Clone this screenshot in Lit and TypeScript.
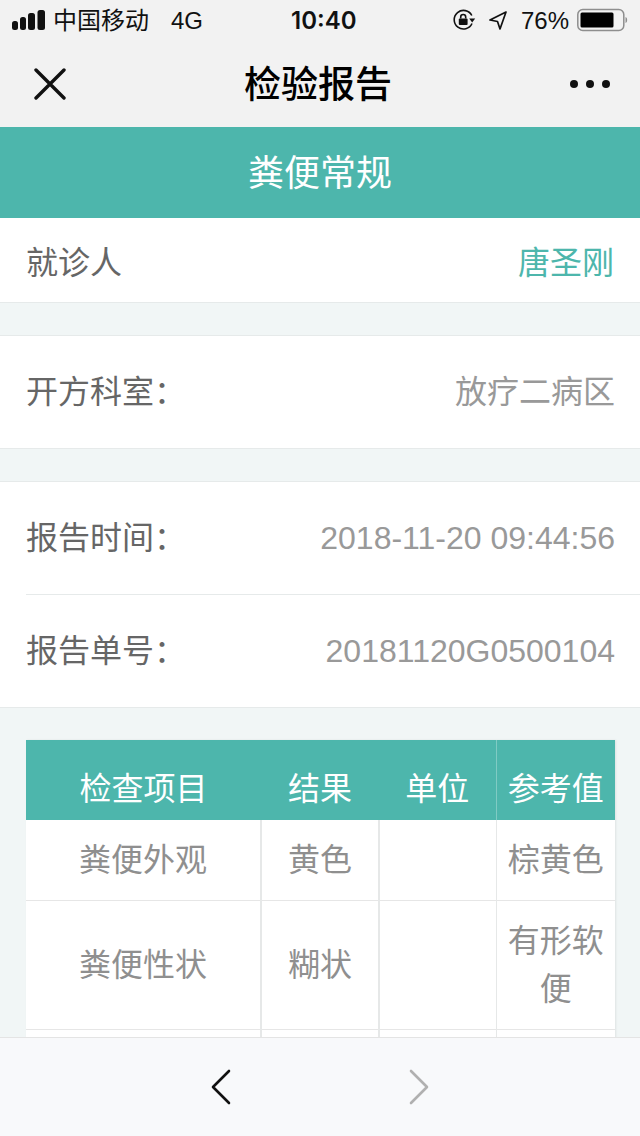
import {css, html, LitElement} from 'lit';
import {customElement} from 'lit/decorators.js';

const infoGroups = [
  [{label: '开方科室：', value: '放疗二病区'}],
  [
    {label: '报告时间：', value: '2018-11-20 09:44:56'},
    {label: '报告单号：', value: '20181120G0500104'},
  ],
];

const tableRows = [
  {name: '粪便外观', result: '黄色', unit: '', ref: '棕黄色', tall: false},
  {name: '粪便性状', result: '糊状', unit: '', ref: '有形软便', tall: true},
  {name: '', result: '', unit: '', ref: '', tall: false},
];

@customElement('app-root')
export class AppRoot extends LitElement {
  static styles = css`
    :host {
      display: flex;
      flex-direction: column;
      width: 640px;
      height: 1136px;
      overflow: hidden;
      background: #f1f6f6;
      font-family: "Liberation Sans", "Noto Sans CJK SC", sans-serif;
      color: #000;
    }
    .top {
      flex: none;
      height: 127px;
      background: #f2f2f2;
    }
    .status {
      display: flex;
      align-items: center;
      height: 40px;
      padding: 0 12px;
      font-size: 24px;
      line-height: 24px;
      color: #111;
    }
    .signal {
      display: block;
      margin-right: 8px;
    }
    .carrier {
      width: 118px;
      padding-top: 2px;
    }
    .network {
      padding-top: 2px;
    }
    .clock {
      flex: 1;
      padding: 2px 0 0 88px;
      font-family: Inter, "Liberation Sans", sans-serif;
      font-weight: 600;
    }
    .percent {
      padding-top: 2px;
      margin: 0 8px 0 14px;
    }
    .lock {
      margin-right: 11px;
    }
    .status svg {
      display: block;
    }
    .nav {
      display: flex;
      align-items: center;
      justify-content: space-between;
      height: 87px;
      padding: 0 30px 0 34px;
    }
    .nav svg {
      display: block;
    }
    .nav-title {
      margin-bottom: 4px;
      font-size: 37px;
      font-weight: 500;
    }
    .banner {
      flex: none;
      height: 91px;
      line-height: 94px;
      text-align: center;
      font-size: 36px;
      color: #fff;
      background: #4db6ac;
    }
    .content {
      flex: 1;
      min-height: 0;
      overflow: hidden;
    }
    .patient {
      display: flex;
      align-items: baseline;
      justify-content: space-between;
      height: 55px;
      padding: 29px 26px 0;
      font-size: 32px;
      line-height: 32px;
      color: #666;
      background: #fff;
      border-bottom: 1px solid #e6eaea;
    }
    .patient-name {
      color: #4db6ac;
    }
    .group {
      margin-top: 32px;
      padding-left: 26px;
      background: #fff;
      border-top: 1px solid #e6eaea;
      border-bottom: 1px solid #e6eaea;
    }
    .row {
      display: flex;
      align-items: baseline;
      justify-content: space-between;
      height: 72px;
      padding: 40px 25px 0 0;
      font-size: 32px;
      line-height: 32px;
      color: #666;
    }
    .row + .row {
      border-top: 1px solid #e6eaea;
    }
    .row-value {
      color: #999;
    }
    .table-wrap {
      margin: 32px 25px 0 26px;
      box-shadow: 1px 0 2px rgba(0, 0, 0, 0.08);
    }
    table {
      width: 589px;
      border-collapse: collapse;
      table-layout: fixed;
      font-size: 32px;
    }
    th {
      height: 80px;
      padding: 12px 0 0;
      box-sizing: border-box;
      font-weight: 400;
      color: #fff;
      background: #4db6ac;
    }
    th.ref {
      border-left: 1px solid #80cbc4;
    }
    td {
      padding: 0 10px;
      text-align: center;
      line-height: 48px;
      color: #8f8f8f;
      background: #fff;
      border-top: 1px solid #e6e6e6;
      border-left: 2px solid #e6e8e8;
    }
    tr.first td {
      border-top: none;
    }
    td:first-child {
      border-left: none;
    }
    td.ref {
      border-left-width: 1px;
    }
    tr.normal td {
      height: 80px;
    }
    tr.tall td {
      height: 128px;
    }
    .bottom {
      flex: none;
      display: flex;
      align-items: center;
      justify-content: center;
      gap: 176px;
      height: 99px;
      box-sizing: border-box;
      background: #f8f9fb;
      border-top: 1px solid #e4e4e4;
    }
    .bottom svg {
      display: block;
    }
  `;

  render() {
    return html`
      <div class="top">
        <div class="status">
          <svg class="signal" width="33" height="20" viewBox="0 0 33 20" fill="#111">
            <rect x="0" y="11" width="6" height="9" rx="2.5"/>
            <rect x="8" y="7" width="6" height="13" rx="2.5"/>
            <rect x="16" y="3" width="7" height="17" rx="2.5"/>
            <rect x="25.500" y="0" width="7.500" height="20" rx="2.5"/>
          </svg>
          <span class="carrier">中国移动</span>
          <span class="network">4G</span>
          <span class="clock">10:40</span>
          <svg class="lock" width="24" height="24" viewBox="0 0 24 24" fill="none" stroke="#111" stroke-width="1.600">
            <path d="M20 15.500A9.300 9.300 0 1 1 19.800 7.500"/>
            <path d="M17.200 10.500h6L20.200 14.500z" fill="#111" stroke="none"/>
            <rect x="6.800" y="10.500" width="8.800" height="6.500" rx="1" fill="#111" stroke="none"/>
            <path d="M8.700 10.500V9a2.500 2.500 0 0 1 5 0v1.500"/>
          </svg>
          <svg width="20" height="20" viewBox="0 0 20 20" fill="none" stroke="#111" stroke-width="1.700" stroke-linejoin="round">
            <path d="M19 2L3 10l7.500 1.500L13 19z"/>
          </svg>
          <span class="percent">76%</span>
          <svg width="51" height="24" viewBox="0 0 51 24">
            <rect x="0.800" y="1.500" width="46" height="21" rx="5" fill="none" stroke="#8e8e8e" stroke-width="1.500"/>
            <rect x="3.500" y="4.500" width="33" height="15" rx="1.500" fill="#000"/>
            <path d="M48.500 9c2.200 .6 2.200 5.400 0 6z" fill="#8e8e8e"/>
          </svg>
        </div>
        <div class="nav">
          <svg width="32" height="32" viewBox="0 0 32 32" stroke="#111" stroke-width="3.400" stroke-linecap="round">
            <path d="M2 2l28 28M30 2L2 30"/>
          </svg>
          <span class="nav-title">检验报告</span>
          <svg width="40" height="12" viewBox="0 0 40 12" fill="#111">
            <circle cx="4" cy="6" r="4"/>
            <circle cx="20" cy="6" r="4"/>
            <circle cx="36" cy="6" r="4"/>
          </svg>
        </div>
      </div>
      <div class="banner">粪便常规</div>
      <div class="content">
        <div class="patient">
          <span>就诊人</span>
          <span class="patient-name">唐圣刚</span>
        </div>
        ${infoGroups.map(
          (group) => html`
            <div class="group">
              ${group.map(
                (item) => html`
                  <div class="row">
                    <span>${item.label}</span>
                    <span class="row-value">${item.value}</span>
                  </div>
                `
              )}
            </div>
          `
        )}
        <div class="table-wrap">
          <table>
            <colgroup>
              <col style="width:235px"/>
              <col style="width:118px"/>
              <col style="width:117px"/>
              <col style="width:119px"/>
            </colgroup>
            <thead>
              <tr>
                <th>检查项目</th>
                <th>结果</th>
                <th>单位</th>
                <th class="ref">参考值</th>
              </tr>
            </thead>
            <tbody>
              ${tableRows.map(
                (row, i) => html`
                  <tr class="${row.tall ? 'tall' : 'normal'} ${i === 0 ? 'first' : ''}">
                    <td>${row.name}</td>
                    <td>${row.result}</td>
                    <td>${row.unit}</td>
                    <td class="ref">${row.ref}</td>
                  </tr>
                `
              )}
            </tbody>
          </table>
        </div>
      </div>
      <div class="bottom">
        <svg width="22" height="36" viewBox="0 0 22 36" fill="none" stroke="#111" stroke-width="2.600" stroke-linecap="round" stroke-linejoin="round">
          <path d="M19 2L3 18l16 16"/>
        </svg>
        <svg width="22" height="36" viewBox="0 0 22 36" fill="none" stroke="#b0b0b0" stroke-width="2.600" stroke-linecap="round" stroke-linejoin="round">
          <path d="M3 2l16 16L3 34"/>
        </svg>
      </div>
    `;
  }
}
